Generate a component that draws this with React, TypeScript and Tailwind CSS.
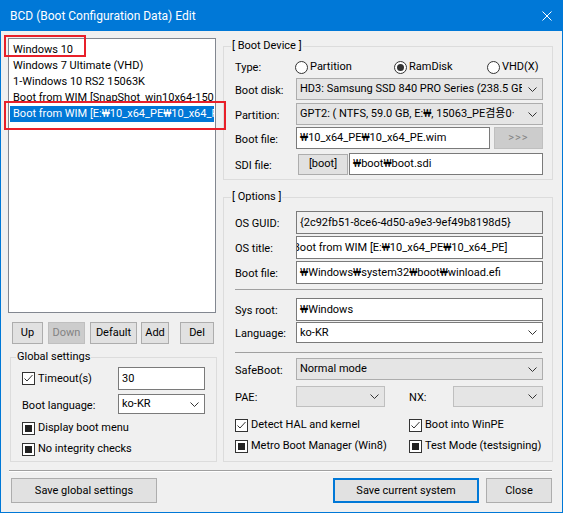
import type React from "react"

const W = "\u20A9"

function Chevron() {
  return (
    <svg width="9" height="5" viewBox="0 0 9 5" className="shrink-0">
      <polyline points="0.5,0.5 4.5,4.5 8.5,0.5" fill="none" stroke="#333" strokeWidth="1" />
    </svg>
  )
}

function Btn({
  children,
  className = "",
  disabled = false,
  primary = false,
}: {
  children: React.ReactNode
  className?: string
  disabled?: boolean
  primary?: boolean
}) {
  const look = disabled
    ? "bg-[#cccccc] border border-[#bfbfbf] text-[#838383]"
    : primary
      ? "bg-[#e1e1e1] border-2 border-[#0078d7] text-black"
      : "bg-[#e1e1e1] border border-[#adadad] text-black"
  return <div className={`flex items-center justify-center shrink-0 ${look} ${className}`}>{children}</div>
}

function TextBox({ children, className = "", ro = false }: { children?: React.ReactNode; className?: string; ro?: boolean }) {
  return (
    <div
      className={`flex items-center border border-[#7a7a7a] pl-[3px] overflow-hidden whitespace-nowrap ${ro ? "bg-[#f0f0f0]" : "bg-white"} ${className}`}
    >
      {children}
    </div>
  )
}

function Combo({ text, className = "", flat = false }: { text?: string; className?: string; flat?: boolean }) {
  return (
    <div
      className={`flex items-center justify-between pl-[3px] pr-[5px] overflow-hidden whitespace-nowrap border ${
        flat ? "bg-[#e5e5e5] border-[#adadad]" : "bg-white border-[#7a7a7a]"
      } ${className}`}
    >
      <span className="overflow-hidden mr-[6px]">{text}</span>
      <Chevron />
    </div>
  )
}

function Check({ label, state, className = "" }: { label: string; state: "checked" | "mixed"; className?: string }) {
  return (
    <div className={`flex items-center h-[14px] ${className}`}>
      <div className="w-[13px] h-[13px] border border-[#333] bg-white flex items-center justify-center shrink-0">
        {state === "checked" ? (
          <svg width="11" height="11" viewBox="0 0 11 11">
            <polyline points="1.5,5.5 4,8 9.5,2" fill="none" stroke="#333" strokeWidth="1" />
          </svg>
        ) : (
          <div className="w-[7px] h-[7px] bg-[#222]" />
        )}
      </div>
      <span className="ml-[3px] whitespace-nowrap">{label}</span>
    </div>
  )
}

function Radio({ label, on = false, className = "" }: { label: string; on?: boolean; className?: string }) {
  return (
    <div className={`flex items-center shrink-0 ${className}`}>
      <div className="w-[13px] h-[13px] rounded-full border border-[#333] bg-white flex items-center justify-center">
        {on && <div className="w-[7px] h-[7px] rounded-full bg-[#333]" />}
      </div>
      <span className="ml-[2px]">{label}</span>
    </div>
  )
}

function Row({ label, children, className = "" }: { label: string; children: React.ReactNode; className?: string }) {
  return (
    <div className={`flex items-center ${className}`}>
      <div className="w-[61px] shrink-0 pt-[3px]">{label}</div>
      {children}
    </div>
  )
}

const entries = [
  "Windows 10",
  "Windows 7 Ultimate (VHD)",
  "1-Windows 10 RS2 15063K",
  "Boot from WIM [SnapShot_win10x64-15063_PE]",
  `Boot from WIM [E:${W}10_x64_PE${W}10_x64_PE]`,
]

export default function App() {
  return (
    <div className="w-[563px] h-[513px] flex flex-col bg-[#f0f0f0] border-x border-b border-[#0078d7] text-[11px] leading-[16px] text-black font-[family-name:Roboto,'Noto_Sans_CJK_KR',sans-serif] overflow-hidden relative">
      {/* title bar */}
      <div className="h-[31px] shrink-0 -mx-[1px] bg-[#0078d7] flex items-center justify-between pl-[10px] pr-[11px] text-white text-[12px]">
        <span>BCD (Boot Configuration Data) Edit</span>
        <svg width="10" height="10" viewBox="0 0 10 10">
          <path d="M0.5 0.5 L9.5 9.5 M9.5 0.5 L0.5 9.5" stroke="#fff" strokeWidth="1" />
        </svg>
      </div>

      <div className="flex-1 flex flex-col pl-[7px] pr-[9px] pt-[7px]">
        <div className="flex h-[424px]">
          {/* left column */}
          <div className="w-[209px] flex flex-col">
            <div className="w-[208px] h-[275px] border border-[#828790] bg-white px-[1px] pt-[3px] overflow-hidden">
              {entries.map((t, i) => (
                <div
                  key={t}
                  className={`h-[16px] pl-[3px] whitespace-nowrap overflow-hidden ${i === 4 ? "bg-[#0078d7] text-white" : ""}`}
                >
                  {t}
                </div>
              ))}
            </div>
            <div className="flex mt-[9px] h-[22px] pl-[4px]">
              <Btn className="w-[31px]">Up</Btn>
              <Btn className="w-[37px] ml-[5px]" disabled>
                Down
              </Btn>
              <Btn className="w-[47px] ml-[5px]">Default</Btn>
              <Btn className="w-[28px] ml-[4px]">Add</Btn>
              <Btn className="w-[34px] ml-[11px]">Del</Btn>
            </div>
            <fieldset className="flex-1 mt-[5px] ml-[2px] w-[207px] border border-[#dcdcdc]">
              <legend className="ml-[5px] px-[1px]">Global settings</legend>
              <div className="pl-[11px] pr-[11px]">
                <div className="flex items-center justify-between mt-[2px]">
                  <Check label="Timeout(s)" state="checked" />
                  <TextBox className="w-[87px] h-[23px]">30</TextBox>
                </div>
                <div className="flex items-center justify-between mt-[4px]">
                  <span className="pt-[3px]">Boot language:</span>
                  <Combo text="ko-KR" className="w-[87px] h-[20px]" />
                </div>
                <Check label="Display boot menu" state="mixed" className="mt-[7px]" />
                <Check label="No integrity checks" state="mixed" className="mt-[7px]" />
              </div>
            </fieldset>
          </div>

          {/* right column */}
          <div className="w-[330px] ml-[6px] flex flex-col">
            <fieldset className="border border-[#dcdcdc] pb-[4px]">
              <legend className="ml-[7px] px-[1px]">[ Boot Device ]</legend>
              <div className="pl-[11px]">
                <div className="flex items-center h-[20px] mt-[3px]">
                  <div className="w-[60px] pt-[2px]">Type:</div>
                  <Radio label="Partition" className="w-[99px]" />
                  <Radio label="RamDisk" on className="w-[93px]" />
                  <Radio label="VHD(X)" />
                </div>
                <Row label="Boot disk:" className="mt-[1px]">
                  <Combo text="HD3: Samsung SSD 840 PRO Series (238.5 GB, 1 Partitions)" flat className="w-[247px] h-[22px]" />
                </Row>
                <Row label="Partition:" className="mt-[3px]">
                  <Combo text={`GPT2: ( NTFS,  59.0 GB, E:${W}, 15063_PE겸용0·`} flat className="w-[247px] h-[22px]" />
                </Row>
                <Row label="Boot file:" className="mt-[2px]">
                  <TextBox className="w-[194px] h-[22px]">{`${W}10_x64_PE${W}10_x64_PE.wim`}</TextBox>
                  <Btn disabled className="w-[49px] h-[22px] ml-[4px] tracking-[1px]">
                    &gt;&gt;&gt;
                  </Btn>
                </Row>
                <Row label="SDI file:" className="mt-[4px]">
                  <Btn className="w-[50px] h-[21px] ml-[2px]">[boot]</Btn>
                  <TextBox className="w-[194px] h-[22px] ml-[1px]">{`${W}boot${W}boot.sdi`}</TextBox>
                </Row>
              </div>
            </fieldset>

            <fieldset className="flex-1 mt-[9px] border border-[#dcdcdc]">
              <legend className="ml-[7px] px-[1px]">[ Options ]</legend>
              <div className="pl-[11px]">
                <Row label="OS GUID:" className="mt-[6px]">
                  <TextBox ro className="w-[247px] h-[23px]">
                    {"{2c92fb51-8ce6-4d50-a9e3-9ef49b8198d5}"}
                  </TextBox>
                </Row>
                <Row label="OS title:" className="mt-[2px]">
                  <TextBox className="w-[247px] h-[23px] !pl-0">
                    <span className="-ml-[4px]">{`Boot from WIM [E:${W}10_x64_PE${W}10_x64_PE]`}</span>
                  </TextBox>
                </Row>
                <Row label="Boot file:" className="mt-[2px]">
                  <TextBox className="w-[247px] h-[23px]">{`${W}Windows${W}system32${W}boot${W}winload.efi`}</TextBox>
                </Row>
                <div className="mt-[5px] w-[307px] h-[1px] bg-[#a0a0a0]" />
                <Row label="Sys root:" className="mt-[8px]">
                  <TextBox className="w-[247px] h-[23px]">{`${W}Windows`}</TextBox>
                </Row>
                <Row label="Language:" className="mt-[1px]">
                  <Combo text="ko-KR" className="w-[247px] h-[21px]" />
                </Row>
                <div className="mt-[9px] w-[307px] h-[1px] bg-[#a0a0a0]" />
                <Row label="SafeBoot:" className="mt-[5px]">
                  <Combo text="Normal mode" flat className="w-[247px] h-[22px]" />
                </Row>
                <div className="flex items-center mt-[6px]">
                  <div className="w-[61px] pt-[3px]">PAE:</div>
                  <Combo flat className="w-[89px] h-[21px] !border-[#bfbfbf]" />
                  <div className="w-[68px] pl-[24px] pt-[3px]">NX:</div>
                  <Combo flat className="w-[90px] h-[21px] !border-[#bfbfbf]" />
                </div>
                <div className="flex mt-[11px]">
                  <Check label="Detect HAL and kernel" state="checked" className="w-[174px]" />
                  <Check label="Boot into WinPE" state="checked" />
                </div>
                <div className="flex mt-[7px]">
                  <Check label="Metro Boot Manager (Win8)" state="mixed" className="w-[174px]" />
                  <Check label="Test Mode (testsigning)" state="mixed" />
                </div>
              </div>
            </fieldset>
          </div>
        </div>

        <div className="mt-[8px] ml-[1px] w-[543px] h-[2px] border-t border-[#a0a0a0] border-b border-b-white" />

        <div className="flex mt-[6px] pl-[3px]">
          <Btn className="w-[146px] h-[25px]">Save global settings</Btn>
          <Btn primary className="w-[146px] h-[25px] ml-[176px]">
            Save current system
          </Btn>
          <Btn className="w-[66px] h-[25px] ml-[7px]">Close</Btn>
        </div>
      </div>

      {/* red highlight annotations */}
      <div className="absolute left-[3px] top-[35px] w-[82px] h-[22px] border-2 border-[#e8202a] pointer-events-none" />
      <div className="absolute left-[3px] top-[101px] w-[222px] h-[29px] border-2 border-[#e8202a] pointer-events-none" />
    </div>
  )
}
